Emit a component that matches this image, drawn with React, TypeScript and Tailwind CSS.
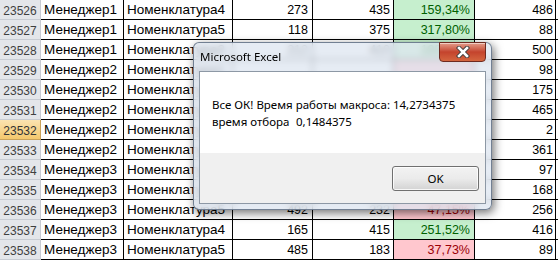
type Row = {
  n: number;
  manager: string;
  item: string;
  plan: number;
  fact: number;
  pct: string;
  good: boolean;
  rest: number;
  active?: boolean;
  covered?: boolean;
};

const rows: Row[] = [
  { n: 23526, manager: "Менеджер1", item: "Номенклатура4", plan: 273, fact: 435, pct: "159,34%", good: true, rest: 486 },
  { n: 23527, manager: "Менеджер1", item: "Номенклатура5", plan: 118, fact: 375, pct: "317,80%", good: true, rest: 88 },
  { n: 23528, manager: "Менеджер1", item: "Номенклатура3", plan: 212, fact: 410, pct: "193,40%", good: true, rest: 500 },
  { n: 23529, manager: "Менеджер2", item: "Номенклатура1", plan: 340, fact: 96, pct: "28,24%", good: false, rest: 98, covered: true },
  { n: 23530, manager: "Менеджер2", item: "Номенклатура2", plan: 150, fact: 310, pct: "206,67%", good: true, rest: 175, covered: true },
  { n: 23531, manager: "Менеджер2", item: "Номенклатура4", plan: 402, fact: 388, pct: "96,52%", good: false, rest: 465, covered: true },
  { n: 23532, manager: "Менеджер2", item: "Номенклатура5", plan: 77, fact: 12, pct: "15,58%", good: false, rest: 2, active: true, covered: true },
  { n: 23533, manager: "Менеджер2", item: "Номенклатура1", plan: 288, fact: 354, pct: "122,92%", good: true, rest: 361, covered: true },
  { n: 23534, manager: "Менеджер3", item: "Номенклатура2", plan: 190, fact: 61, pct: "32,11%", good: false, rest: 97, covered: true },
  { n: 23535, manager: "Менеджер3", item: "Номенклатура3", plan: 215, fact: 330, pct: "153,49%", good: true, rest: 168, covered: true },
  { n: 23536, manager: "Менеджер3", item: "Номенклатура5", plan: 492, fact: 232, pct: "47,15%", good: false, rest: 256 },
  { n: 23537, manager: "Менеджер3", item: "Номенклатура4", plan: 165, fact: 415, pct: "251,52%", good: true, rest: 416 },
  { n: 23538, manager: "Менеджер3", item: "Номенклатура5", plan: 485, fact: 183, pct: "37,73%", good: false, rest: 89 },
];

function Sheet() {
  return (
    <div className="flex flex-col font-['Liberation_Sans',Arial,sans-serif] text-black">
      {rows.map((r) => (
        <div key={r.n} className="flex h-[20px]">
          <div
            className={
              r.active
                ? "w-[41px] flex items-center justify-center pt-[2px] text-[12px] text-[#333] border-r border-b border-[#c9a25a] bg-gradient-to-b from-[#fbe3b0] to-[#f4c86c]"
                : "w-[41px] flex items-center justify-center pt-[2px] text-[12px] text-[#3f3f3f] border-r border-b border-[#c8ccd3] bg-[#e4e6ea]"
            }
          >
            {r.n}
          </div>
          <div className="w-[83px] flex items-center pl-[3px] pt-[2px] text-[13.5px] border-r border-b border-black whitespace-nowrap overflow-hidden">
            {r.manager}
          </div>
          <div className="w-[109px] flex items-center pl-[3px] pt-[2px] text-[13.5px] border-r border-b border-black whitespace-nowrap overflow-hidden">
            {r.item}
          </div>
          <div className="w-[80px] flex items-center justify-end pr-[4px] pt-[2px] text-[12.5px] border-r border-b border-black">
            {r.covered ? "" : r.plan}
          </div>
          <div className="w-[81px] flex items-center justify-end pr-[3px] pt-[2px] text-[12.5px] border-r border-b border-black">
            {r.covered ? "" : r.fact}
          </div>
          <div
            className={
              r.good
                ? "w-[81px] flex items-center justify-end pr-[4px] pt-[2px] text-[12.5px] border-r border-b border-black bg-[#c6efce] text-[#006100]"
                : "w-[81px] flex items-center justify-end pr-[4px] pt-[2px] text-[12.5px] border-r border-b border-black bg-[#ffc7ce] text-[#9c0006]"
            }
          >
            {r.covered ? "" : r.pct}
          </div>
          <div className="w-[81px] flex items-center justify-end pr-[2px] pt-[2px] text-[12.5px] border-r border-b border-black">
            {r.rest}
          </div>
          <div className="w-[2px] border-b border-black" />
        </div>
      ))}
    </div>
  );
}

function CloseButton() {
  return (
    <div className="-mt-px mr-[5px] ml-auto w-[47px] h-[20px] rounded-b-[4px] border border-[#6e2a20] bg-gradient-to-b from-[#e39c8b] via-[#c4432d] to-[#d4653f] shadow-[inset_0_1px_0_rgba(255,255,255,0.5)] flex items-center justify-center">
      <svg width="14" height="12" viewBox="0 0 14 12">
        <path d="M3 2 L11 10 M11 2 L3 10" stroke="#3b3b3b" strokeWidth="4.4" strokeLinecap="square" />
        <path d="M3 2 L11 10 M11 2 L3 10" stroke="#ffffff" strokeWidth="2.6" strokeLinecap="square" />
      </svg>
    </div>
  );
}

function MessageBox() {
  return (
    <div className="absolute left-[193px] top-[42px] w-[299px] h-[168px] rounded-[6px] border border-[#55657a]/80 bg-[#dde6f0]/75 backdrop-blur-[3px] shadow-[2px_3px_10px_rgba(0,0,0,0.55)] flex flex-col font-['Noto_Sans',sans-serif]">
      <div className="h-[28px] flex items-start">
        <span className="pl-[6px] pt-[6px] text-[11.5px] leading-[16px] text-black">Microsoft Excel</span>
        <CloseButton />
      </div>
      <div className="mx-[5px] mb-[5px] flex-1 border border-[#8d98a5] flex flex-col">
        <div className="h-[81px] bg-white pl-[12px] pt-[24px] text-[11.5px] leading-[17px] text-black">
          <div>Все ОК! Время работы макроса: 14,2734375</div>
          <div className="flex">
            <span className="w-[84px] shrink-0">время отбора</span>
            <span>0,1484375</span>
          </div>
        </div>
        <div className="flex-1 bg-[#f0f0f0] flex justify-end items-start pt-[13px] pr-[6px]">
          <button className="w-[87px] h-[25px] rounded-[3px] border border-[#707070] bg-gradient-to-b from-[#f2f2f2] via-[#ebebeb] to-[#d3d3d3] shadow-[inset_0_0_0_1px_rgba(255,255,255,0.8)] text-[11.5px] text-black">
            OK
          </button>
        </div>
      </div>
    </div>
  );
}

export default function App() {
  return (
    <div className="relative w-[558px] h-[260px] overflow-hidden bg-white">
      <Sheet />
      <MessageBox />
    </div>
  );
}
